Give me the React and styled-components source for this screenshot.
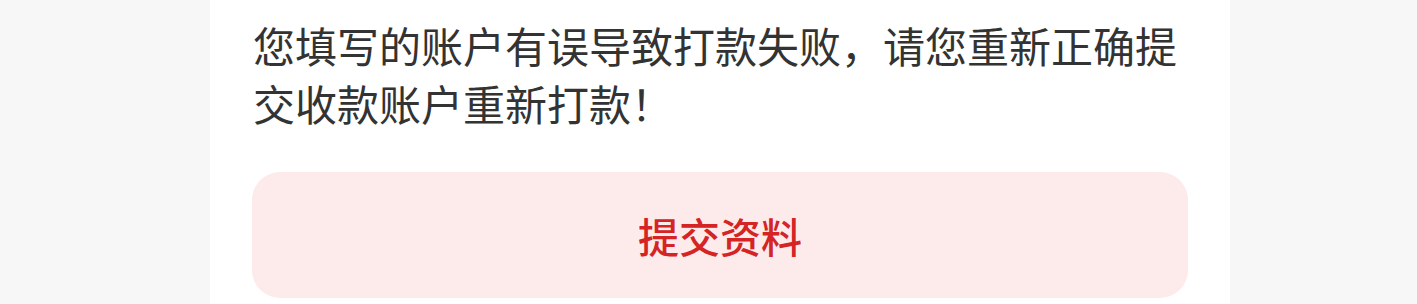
import React from "react";
import styled, { createGlobalStyle } from "styled-components";

const GlobalStyle = createGlobalStyle`
    html, body {
        margin: 0;
        padding: 0;
        background: #f7f7f7;
        font-family: "Noto Sans CJK SC", "Noto Sans", sans-serif;
    }
`;

const Page = styled.div`
    display: flex;
    padding-left: 210px;
    height: 304px;
    overflow: hidden;
`;

const Card = styled.div`
    width: 1020px;
    background: #ffffff;
    padding: 16px 42px 0 42px;
    box-sizing: border-box;
    display: flex;
    flex-direction: column;
`;

const Message = styled.p`
    margin: 0 0 0 1px;
    width: 936px;
    font-size: 42px;
    line-height: 58px;
    color: #333333;
`;

const SubmitButton = styled.button`
    margin-top: 40px;
    width: 936px;
    height: 126px;
    border: none;
    border-radius: 28px;
    background: #fdeaea;
    color: #d42424;
    font-family: inherit;
    font-size: 41px;
    font-weight: 500;
    display: flex;
    align-items: center;
    justify-content: center;
    cursor: pointer;
`;

const App = () => {
    return (
        <>
            <GlobalStyle />
            <Page>
                <Card>
                    <Message>
                        您填写的账户有误导致打款失败，请您重新正确提交收款账户重新打款！
                    </Message>
                    <SubmitButton>提交资料</SubmitButton>
                </Card>
            </Page>
        </>
    );
};

export default App;
